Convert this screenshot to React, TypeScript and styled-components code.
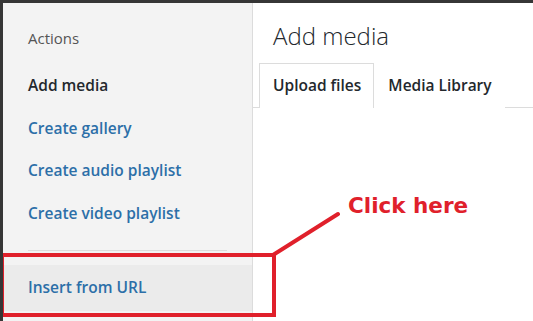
import React from "react";
import styled, { createGlobalStyle } from "styled-components";

const Global = createGlobalStyle`
  html, body { margin: 0; padding: 0; background: #fff; }
  body { font-family: "Open Sans", "Noto Sans", sans-serif; }
  * { box-sizing: border-box; }
`;

const Frame = styled.div`
  position: relative;
  width: 533px;
  height: 321px;
  display: flex;
  border-top: 3px solid #363636;
  border-left: 3px solid #363636;
  background: #fff;
  overflow: hidden;
`;

const Sidebar = styled.nav`
  width: 250px;
  flex: none;
  background: #f3f3f3;
  border-right: 1px solid #dcdcdc;
  display: flex;
  flex-direction: column;
`;

const Heading = styled.div`
  padding: 24px 25px 15px;
  line-height: 22px;
  font-size: 15px;
  font-weight: 400;
  color: #555;
`;

const Item = styled.div<{ $current?: boolean; $highlight?: boolean }>`
  padding: ${(p) => (p.$highlight ? "11px 25px 13px" : "10px 25px 10.67px")};
  line-height: 22px;
  font-size: 15.5px;
  font-weight: 600;
  color: ${(p) => (p.$current ? "#23282d" : "#2c6fa8")};
  background: ${(p) => (p.$highlight ? "#ebebeb" : "transparent")};
`;

const Separator = styled.hr`
  border: none;
  border-top: 1px solid #dcdcdc;
  margin: 15px 25px 14px;
  height: 0;
`;

const Main = styled.main`
  flex: 1;
  display: flex;
  flex-direction: column;
`;

const Title = styled.h1`
  margin: 0;
  padding: 18px 20px 12px;
  font-size: 24px;
  line-height: 30px;
  font-weight: 300;
  color: #23282d;
`;

const Tabs = styled.div`
  display: flex;
  padding-left: 6px;
  border-bottom: 1px solid #dcdcdc;
`;

const Tab = styled.div<{ $active?: boolean }>`
  padding: 10px 12px 12px 13px;
  line-height: 22px;
  font-size: 15.5px;
  font-weight: 600;
  color: #23282d;
  border: 1px solid ${(p) => (p.$active ? "#dcdcdc" : "transparent")};
  border-bottom: none;
  background: #fff;
  margin-bottom: -1px;
`;

const Overlay = styled.svg`
  position: absolute;
  left: -3px;
  top: -3px;
  pointer-events: none;
`;

const Callout = styled.div`
  position: absolute;
  left: 345px;
  top: 189px;
  font-family: "DejaVu Sans", sans-serif;
  font-weight: 700;
  font-size: 21.5px;
  line-height: 28px;
  color: #e0202b;
`;

export default function App() {
  return (
    <>
      <Global />
      <Frame>
        <Sidebar>
          <Heading>Actions</Heading>
          <Item $current>Add media</Item>
          <Item>Create gallery</Item>
          <Item>Create audio playlist</Item>
          <Item>Create video playlist</Item>
          <Separator />
          <Item $highlight>Insert from URL</Item>
        </Sidebar>
        <Main>
          <Title>Add media</Title>
          <Tabs>
            <Tab $active>Upload files</Tab>
            <Tab>Media Library</Tab>
          </Tabs>
        </Main>
        <Overlay width="533" height="321" viewBox="0 0 533 321">
          <rect x="2" y="255" width="272" height="60" fill="none" stroke="#e0202b" strokeWidth="4" />
          <line x1="273" y1="255" x2="338" y2="214" stroke="#e0202b" strokeWidth="4" strokeLinecap="round" />
        </Overlay>
        <Callout>Click here</Callout>
      </Frame>
    </>
  );
}
